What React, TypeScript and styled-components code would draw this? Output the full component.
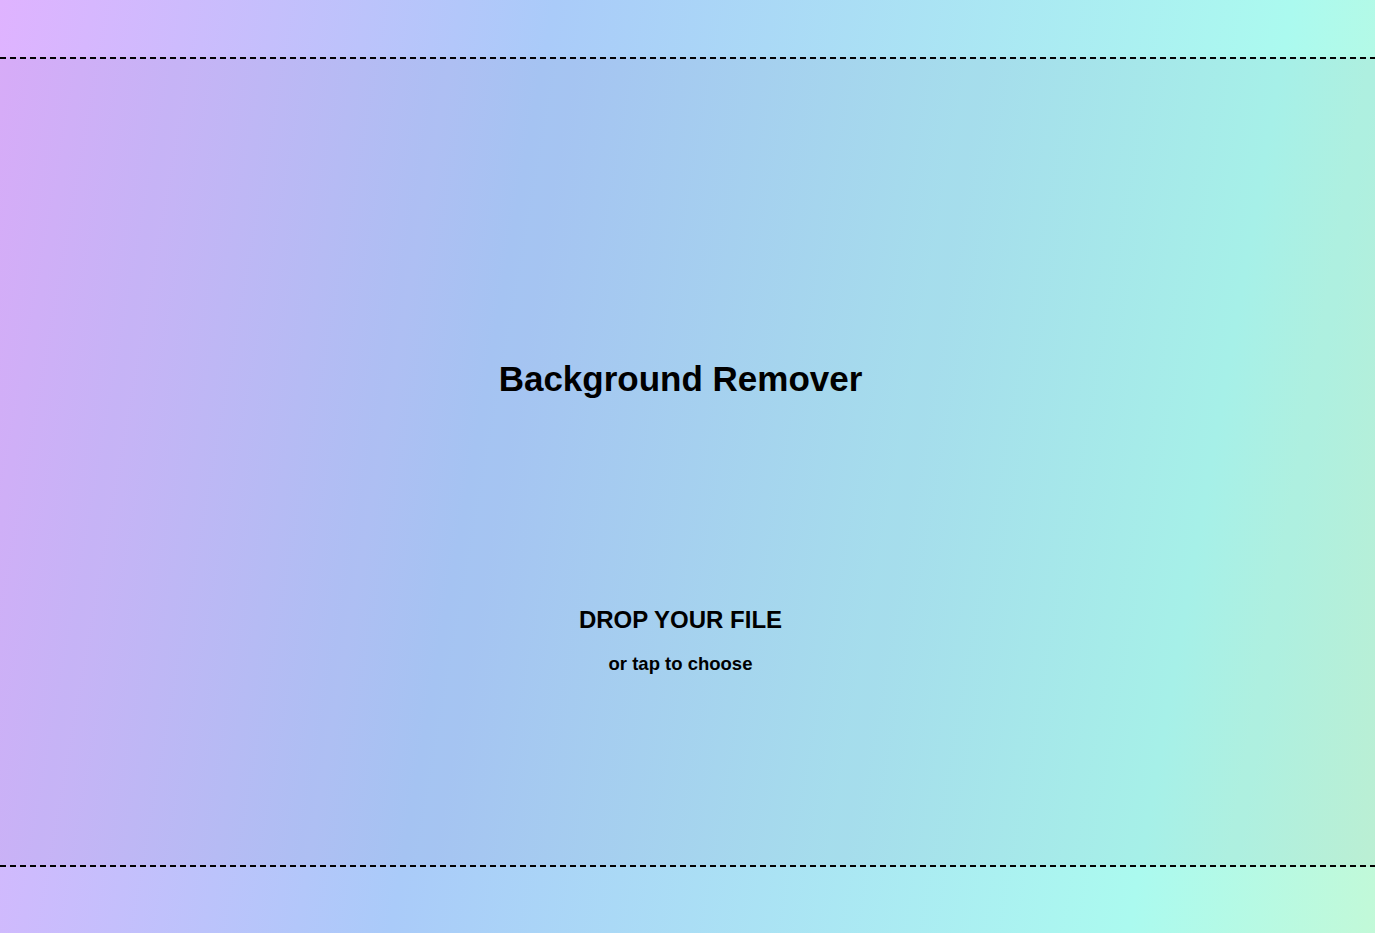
import React from 'react';
import styled, { createGlobalStyle } from 'styled-components';

const GlobalStyle = createGlobalStyle`
  html, body {
    margin: 0;
    padding: 0;
  }
  body {
    font-family: "Liberation Sans", Arial, sans-serif;
    color: #000;
  }
`;

const dash = 'repeating-linear-gradient(90deg, #000 0 6px, transparent 6px 10px)';

const Page = styled.div`
  box-sizing: border-box;
  min-height: 933px;
  padding: 57px 0 66px;
  background: linear-gradient(
    100deg,
    #dfb3ff 0%,
    #aacbf9 36%,
    #abfaef 84%,
    #c2f9d8 100%
  );
`;

const DropZone = styled.label`
  box-sizing: border-box;
  display: flex;
  flex-direction: column;
  align-items: center;
  height: 810px;
  padding: 2px 14px 2px 0;
  background:
    ${dash} top left / 100% 2px no-repeat,
    ${dash} bottom left / 100% 2px no-repeat,
    rgba(50, 0, 80, 0.04);
  cursor: pointer;
`;

const Title = styled.h1`
  margin: 302px 0 0;
  font-size: 35px;
  line-height: 1;
  font-weight: 700;
`;

const DropText = styled.div<{ $size: number; $gap: number }>`
  margin-top: ${(p) => p.$gap}px;
  font-size: ${(p) => p.$size}px;
  line-height: 1;
  font-weight: 700;
`;

const HiddenInput = styled.input`
  display: none;
`;

const App: React.FC = () => {
  return (
    <>
      <GlobalStyle />
      <Page>
        <DropZone>
          <HiddenInput type="file" accept="image/*" />
          <Title>Background Remover</Title>
          <DropText $size={24} $gap={212}>
            DROP YOUR FILE
          </DropText>
          <DropText $size={18.5} $gap={23}>
            or tap to choose
          </DropText>
        </DropZone>
      </Page>
    </>
  );
};

export default App;
